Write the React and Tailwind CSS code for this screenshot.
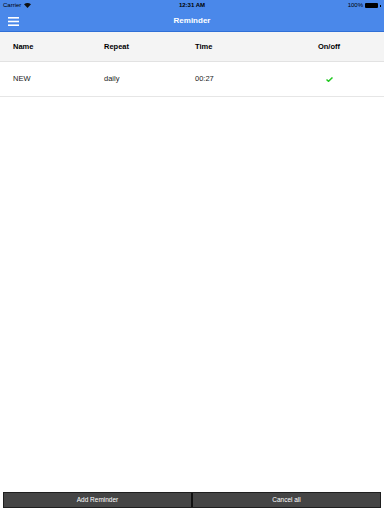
import React from 'react';

const rows = [{ name: 'NEW', repeat: 'daily', time: '00:27', on: true }];

const App = () => {
  return (
    <div className="w-[384px] h-[512px] bg-white flex flex-col relative" style={{ fontFamily: '"Liberation Sans", Arial, sans-serif' }}>
      {/* Status + nav bar */}
      <div className="bg-[#4a88ea] border-b border-[#2f6fd6] h-[32px] flex flex-col">
        <div className="h-[11px] flex items-center justify-between px-[3px] text-[6px] text-black">
          <div className="flex items-center gap-[3px]">
            <span>Carrier</span>
            <svg width="7" height="5" viewBox="0 0 7 5">
              <path d="M0 1.2 Q3.5 -1 7 1.2 L3.5 5 Z" fill="#111" />
            </svg>
          </div>
          <span className="font-bold absolute left-1/2 -translate-x-1/2">12:31 AM</span>
          <div className="flex items-center gap-[2px]">
            <span>100%</span>
            <div className="w-[13px] h-[5px] bg-black rounded-[1px]" />
            <div className="w-[1px] h-[2px] bg-black" />
          </div>
        </div>
        <div className="flex-1 flex items-center relative">
          <svg className="ml-[8px]" width="11" height="9" viewBox="0 0 11 9">
            <rect x="0" y="0" width="11" height="1.6" fill="#fff" />
            <rect x="0" y="3.7" width="11" height="1.6" fill="#fff" />
            <rect x="0" y="7.4" width="11" height="1.6" fill="#fff" />
          </svg>
          <span className="absolute left-1/2 -translate-x-1/2 text-white text-[8px] font-bold">Reminder</span>
        </div>
      </div>

      {/* Table header */}
      <div className="h-[30px] bg-[#f4f4f4] border-b border-[#e2e2e2] flex items-center pl-[13px] pr-[12px] text-[7.5px] font-bold text-black">
        <div className="w-[91px]">Name</div>
        <div className="w-[91px]">Repeat</div>
        <div className="w-[91px]">Time</div>
        <div className="flex-1 text-center">On/off</div>
      </div>

      {rows.map((r, i) => (
        <div key={i} className="h-[35px] border-b border-[#e6e6e6] flex items-center pl-[13px] pr-[12px] text-[7.5px] text-[#222]">
          <div className="w-[91px]">{r.name}</div>
          <div className="w-[91px]">{r.repeat}</div>
          <div className="w-[91px]">{r.time}</div>
          <div className="flex-1 flex justify-center">
            {r.on && (
              <svg width="7" height="5" viewBox="0 0 7 5">
                <path d="M0.5 2.5 L2.5 4.3 L6.5 0.5" stroke="#22c922" strokeWidth="1.5" fill="none" />
              </svg>
            )}
          </div>
        </div>
      ))}

      <div className="flex-1" />

      {/* Bottom buttons */}
      <div className="mx-[3px] mb-[4px] h-[16px] bg-[#454545] border border-[#1f1f1f] flex text-white text-[6.5px]">
        <button className="flex-1 flex items-center justify-center border-r-2 border-[#111]">Add Reminder</button>
        <button className="flex-1 flex items-center justify-center">Cancel all</button>
      </div>
    </div>
  );
};

export default App;
